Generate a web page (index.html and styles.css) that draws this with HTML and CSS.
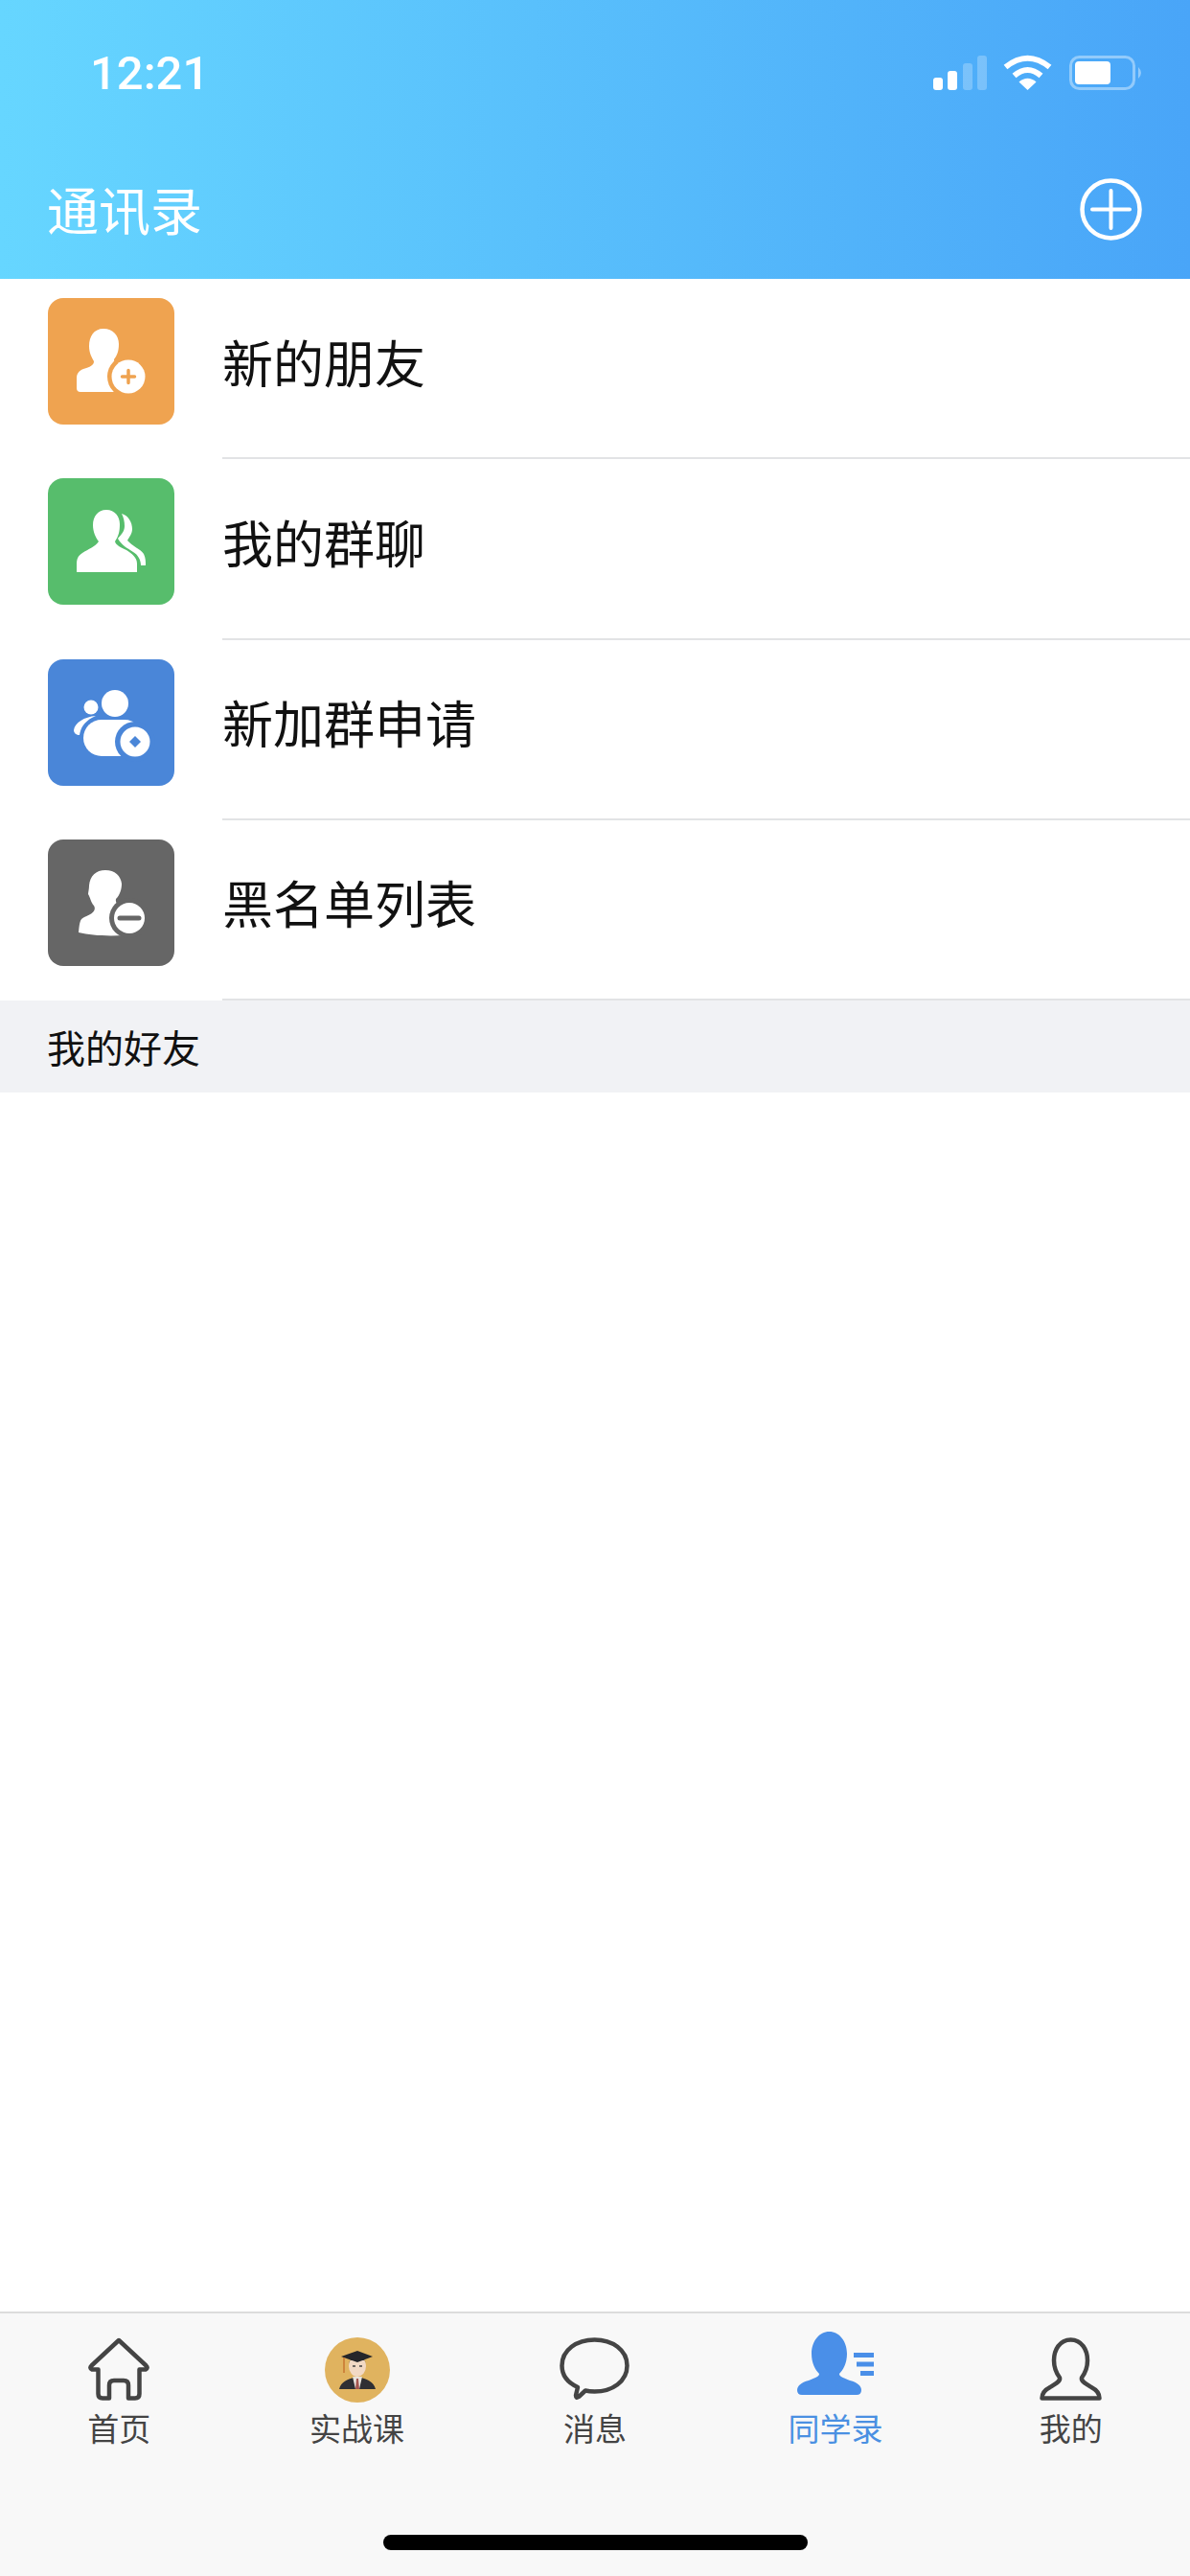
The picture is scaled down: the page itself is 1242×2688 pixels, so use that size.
FILE: index.html
```html
<!DOCTYPE html>
<html lang="zh-CN">
<head>
<meta charset="utf-8">
<title>通讯录</title>
<link rel="stylesheet" href="styles.css">
</head>
<body>
<div class="page">
  <header class="header">
    <div class="status">
      <span class="time">12:21</span>
      <svg class="status-icons" width="221" height="38" viewBox="0 0 221 38">
        <g fill="#fff">
          <rect x="1" y="24" width="10" height="13" rx="3"/>
          <rect x="16" y="17" width="10" height="20" rx="3"/>
          <rect x="32" y="9" width="10" height="28" rx="3" opacity=".25"/>
          <rect x="47" y="1" width="10" height="36" rx="3" opacity=".25"/>
          <path d="M99.5 37 L90.5 28.5 Q99.5 21 108.5 28.5Z"/>
        </g>
        <g fill="none" stroke="#fff" stroke-width="6">
          <path d="M76.5 13 Q99.5 -5.5 122.5 13"/>
          <path d="M85.5 22 Q99.5 10 113.5 22"/>
        </g>
        <rect x="144.5" y="2.5" width="66" height="33" rx="9" fill="none" stroke="#fff" stroke-opacity=".4" stroke-width="3"/>
        <rect x="149" y="7" width="37" height="24" rx="4" fill="#fff"/>
        <path d="M215 13 Q221 19 215 25Z" fill="#fff" fill-opacity=".4"/>
      </svg>
    </div>
    <div class="nav">
      <h1 class="title">通讯录</h1>
      <svg class="add" width="65" height="65" viewBox="0 0 65 65">
        <circle cx="32.5" cy="32.5" r="30" fill="none" stroke="#fff" stroke-width="4.5"/>
        <path d="M13 32.500 H52 M32.500 13 V52" stroke="#fff" stroke-width="4" stroke-linecap="round"/>
      </svg>
    </div>
  </header>

  <main class="main">
    <div class="row">
      <svg class="row-icon" viewBox="0 0 132 132">
        <rect width="132" height="132" rx="16" fill="#efa350"/>
        <path fill="#fff" d="M58 32 C48 32 43 40 43 50 C43 58 46 62 48 66 C48 70 44 72 37 74 C32 76 30 79 30 84 L30 94 Q30 98 34 98 L78 98 L78 72 C72 70 69 68 69 64 C72 60 74 56 74 48 C74 39 68 32 58 32Z"/>
        <circle cx="84" cy="82" r="22" fill="#efa350"/>
        <circle cx="84" cy="82" r="17.500" fill="#fff"/>
        <path d="M77.500 82 H90.500 M84 75.500 V88.500" stroke="#efa350" stroke-width="3.500" stroke-linecap="round"/>
      </svg>
      <div class="row-body"><span class="row-text">新的朋友</span></div>
    </div>
    <div class="row">
      <svg class="row-icon" viewBox="0 0 132 132">
        <rect width="132" height="132" rx="16" fill="#57bd6c"/>
        <path fill="#fff" d="M61 33 C52 33 47 40 47 49 C47 56 50 62 53 66 C50 71 42 74 36 78 C31 81 30 85 30 90 L30 98 L93 98 L93 89 C93 83 88 79 82 75 C76 72 71 70 70 66 C74 60 75 55 75 48 C75 40 70 33 61 33Z"/>
        <path fill="#fff" d="M77 37 C84 39 88 46 88 53 C88 58 85 61 83 65 C88 71 97 74 100 79 C102 83 102 87 102 91 L97 91 C97 85 94 80 89 77 C83 73 77 70 73 63 C76 59 80 56 80 50 C80 45 79 41 77 37Z"/>
      </svg>
      <div class="row-body"><span class="row-text">我的群聊</span></div>
    </div>
    <div class="row">
      <svg class="row-icon" viewBox="0 0 132 132">
        <rect width="132" height="132" rx="16" fill="#4a86d8"/>
        <g fill="#fff">
          <circle cx="70" cy="46" r="14"/>
          <circle cx="45" cy="50" r="7.500"/>
          <path d="M50 59 C38 60 28 66 27 74 C27 77 30 79 33 79 C34 72 38 64 50 59Z"/>
          <rect x="37" y="63" width="62" height="38" rx="19"/>
        </g>
        <circle cx="91" cy="86" r="21" fill="#4a86d8"/>
        <circle cx="91" cy="86" r="15.500" fill="#fff"/>
        <path d="M91 80 L97 86 L91 92 L85 86Z" fill="#4a86d8"/>
      </svg>
      <div class="row-body"><span class="row-text">新加群申请</span></div>
    </div>
    <div class="row">
      <svg class="row-icon" viewBox="0 0 132 132">
        <rect width="132" height="132" rx="16" fill="#666"/>
        <path fill="#fff" d="M60 32 C50 32 44 38 43 48 C43 52 42 55 42 57 C44 60 45 66 48 69 C51 74 46 78 38 81 C33 83 33 88 32 97 C45 100 60 101 80 100 L80 72 C74 69 70 67 71 62 C75 58 77 52 77 46 C76 38 70 32 60 32Z"/>
        <circle cx="85" cy="82" r="21" fill="#666"/>
        <circle cx="85" cy="82" r="16" fill="#fff"/>
        <path d="M75 82 H95" stroke="#666" stroke-width="5" stroke-linecap="round"/>
      </svg>
      <div class="row-body"><span class="row-text">黑名单列表</span></div>
    </div>
    <div class="section">我的好友</div>
  </main>

  <footer class="tabbar">
    <nav class="tabs">
      <div class="tab">
        <div class="tab-icon tab-icon-home">
          <svg width="64" height="66" viewBox="0 0 64 66">
            <path fill="none" stroke="#444" stroke-width="4.500" stroke-linejoin="round" d="M32 3 L60.500 29.500 Q63 32 60 33.500 H53.500 V59 Q53.500 63.500 49 63.500 H42 V50 Q42 45 37 45 H27 Q22 45 22 50 V63.500 H15 Q10.500 63.500 10.500 59 V33.500 H4 Q1 32 3.500 29.500Z"/>
          </svg>
        </div>
        <span class="tab-label">首页</span>
      </div>
      <div class="tab">
        <div class="tab-icon tab-icon-home">
          <svg width="68" height="68" viewBox="0 0 68 68">
            <circle cx="34" cy="34" r="34" fill="#e0b35f"/>
            <path d="M15 54 C17 46 24 44 30 42 L38 42 C44 44 51 46 53 54Z" fill="#2f2f33"/>
            <path d="M29 41 L39 41 L36 54 L32 54Z" fill="#e9e3dc"/>
            <path d="M33 43 L35 43 L36 54 L32 54Z" fill="#a4554f"/>
            <ellipse cx="34" cy="30" rx="9" ry="11" fill="#f2d9c5"/>
            <path d="M25 27 C25 20 43 20 43 27 L42 24 L26 24Z" fill="#222"/>
            <path d="M17 20 L34 14 L50 20 L34 26Z" fill="#25262a"/>
            <path d="M20 21 V37" stroke="#c9752f" stroke-width="1.500"/>
            <path d="M29 30 H32 M36 30 H39" stroke="#444" stroke-width="1.500"/>
          </svg>
        </div>
        <span class="tab-label">实战课</span>
      </div>
      <div class="tab">
        <div class="tab-icon tab-icon-home">
          <svg width="73" height="66" viewBox="0 0 73 66">
            <path fill="none" stroke="#444" stroke-width="4.500" stroke-linejoin="round" d="M19 52 C8 47 2.500 39 2.500 29.500 C2.500 13 18 2.500 36.500 2.500 C55 2.500 70.500 13 70.500 29.500 C70.500 46 55 56.500 36.500 56.500 Q31 56.500 27 55.500 L20 62 Q17 64 17 60.500Z"/>
          </svg>
        </div>
        <span class="tab-label">消息</span>
      </div>
      <div class="tab tab-active">
        <div class="tab-icon">
          <svg width="80" height="66" viewBox="0 0 80 66">
            <path fill="#4a8fe8" d="M33.500 0 C23 0 15 10 15 23 C15 33 19 40 23 44 C23 47 19 48 12 51 C4 53 0 57 0 61 Q0 66 5 66 H62 Q67 66 67 61 C67 57 63 53 55 51 C48 48 44 47 44 44 C48 40 52 33 52 23 C52 10 44 0 33.500 0Z"/>
            <path d="M59 24.500 H80 M62 34 H80 M66 43.500 H80" stroke="#4a8fe8" stroke-width="5"/>
          </svg>
        </div>
        <span class="tab-label tab-label-active">同学录</span>
      </div>
      <div class="tab">
        <div class="tab-icon tab-icon-home">
          <svg width="65" height="66" viewBox="0 0 65 66">
            <path fill="none" stroke="#444" stroke-width="4.500" stroke-linejoin="round" d="M32.500 2.500 C21 2.500 15 13 15 24 C15 32 18 38 21 42 C22 46 17 48 11 52 C5 55 2.500 58 2.500 63.500 H62.500 C62.500 58 60 55 54 52 C48 48 43 46 44 42 C47 38 50 32 50 24 C50 13 44 2.500 32.500 2.500Z"/>
          </svg>
        </div>
        <span class="tab-label">我的</span>
      </div>
    </nav>
    <div class="home-indicator"></div>
  </footer>
</div>
</body>
</html>
```
FILE: styles.css
```css
* { box-sizing: border-box; }
html, body { margin: 0; padding: 0; }
body {
  background: #fff;
  font-family: "Noto Sans CJK SC", "Liberation Sans", sans-serif;
}
.page {
  width: 1242px;
  height: 2688px;
  display: flex;
  flex-direction: column;
  overflow: hidden;
}
.header {
  height: 291px;
  flex: none;
  background: linear-gradient(90deg, #66d6ff 0%, #49a5f8 100%);
  color: #fff;
}
.status {
  height: 152px;
  display: flex;
  align-items: center;
  justify-content: space-between;
  padding: 0 48px 0 94px;
}
.time {
  font-family: Roboto, "Liberation Sans", sans-serif;
  font-size: 49px;
  font-weight: 500;
  line-height: 1;
  letter-spacing: 0;
}
.status-icons { display: block; }
.nav {
  height: 139px;
  display: flex;
  align-items: center;
  justify-content: space-between;
  padding: 0 50px 7px 49px;
}
.title {
  margin: 0;
  font-size: 54px;
  font-weight: 400;
  line-height: 1;
}
.add { display: block; }
.main {
  flex: 1;
  background: #fff;
}
.row {
  height: 188.25px;
  display: flex;
  padding-left: 50px;
}
.row-icon {
  width: 132px;
  height: 132px;
  flex: none;
  margin: 20px 50px 0 0;
  display: block;
}
.row-body {
  flex: 1;
  display: flex;
  align-items: center;
  padding-bottom: 14px;
  border-bottom: 2px solid #e2e3e5;
}
.row-text {
  font-size: 53px;
  line-height: 1;
  color: #111;
}
.section {
  height: 96px;
  display: flex;
  align-items: center;
  padding-left: 49px;
  background: #f1f2f5;
  font-size: 40px;
  color: #111;
}
.tabbar {
  height: 276px;
  flex: none;
  display: flex;
  flex-direction: column;
  background: #f8f8f8;
  border-top: 2px solid #dcdcdc;
}
.tabs {
  display: grid;
  grid-template-columns: repeat(5, 1fr);
  padding-top: 19px;
}
.tab {
  display: flex;
  flex-direction: column;
  align-items: center;
}
.tab-active { padding-left: 5px; }
.tab-icon {
  height: 74px;
  display: flex;
  align-items: flex-start;
}
.tab-icon svg { display: block; }
.tab-icon-home { padding-top: 6px; }
.tab-label {
  margin-top: 6px;
  font-size: 33px;
  line-height: 40px;
  color: #444;
}
.tab-label-active { color: #4a90e2; }
.home-indicator {
  width: 443px;
  height: 16px;
  margin: auto 0 27px 400px;
  background: #000;
  border-radius: 8px;
}
```
